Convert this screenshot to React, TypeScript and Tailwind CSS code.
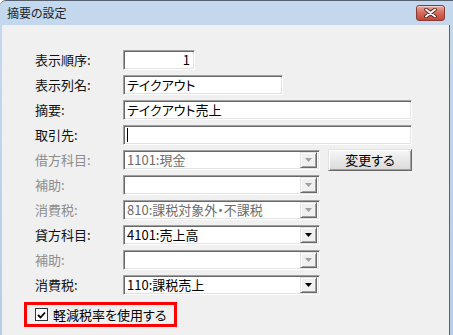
import React from 'react';

const sunken =
  'border border-t-[#a0a0a0] border-l-[#a0a0a0] border-b-white border-r-white shadow-[inset_1px_1px_0_#696969,inset_-1px_-1px_0_#e3e3e3] bg-white';
const raised =
  'border border-t-[#e3e3e3] border-l-[#e3e3e3] border-b-[#696969] border-r-[#696969] shadow-[inset_1px_1px_0_#ffffff,inset_-1px_-1px_0_#a0a0a0]';

const Row: React.FC<{ label: string; disabled?: boolean; children: React.ReactNode }> = ({
  label,
  disabled,
  children,
}) => (
  <div className="flex items-center h-[25px]">
    <span className={`w-[88px] shrink-0 text-[13px] ${disabled ? 'text-[#8d8d8d]' : 'text-[#111]'}`}>{label}</span>
    {children}
  </div>
);

const TextBox: React.FC<{ value?: string; width: string; right?: boolean; caret?: boolean }> = ({
  value,
  width,
  right,
  caret,
}) => (
  <div className={`${sunken} ${width} h-[20px] flex items-center px-[3px] text-[13px] ${right ? 'justify-end pr-[4px]' : ''}`}>
    {caret ? <span className="w-px h-[14px] bg-black" /> : <span className="leading-none">{value}</span>}
  </div>
);

const Combo: React.FC<{ value?: string; disabled?: boolean }> = ({ value, disabled }) => (
  <div className={`${sunken} w-[197px] h-[20px] flex items-center pl-[3px] pr-[2px]`}>
    <span className={`flex-1 text-[13px] leading-none ${disabled ? 'text-[#6d6d6d]' : 'text-black'}`}>{value}</span>
    <div className={`${raised} bg-[#f0f0f0] w-[17px] h-[16px] flex items-center justify-center`}>
      <svg width="7" height="4" viewBox="0 0 7 4">
        <polygon points="0,0 7,0 3.5,4" fill={disabled ? '#a0a0a0' : '#000'} />
      </svg>
    </div>
  </div>
);

export default function App() {
  return (
    <div className="w-[453px] h-[335px] flex flex-col bg-gradient-to-b from-[#c4d9ee] to-[#b6cee8] rounded-tl-[6px] border-t border-[#55606e] overflow-hidden font-['Noto_Sans_CJK_JP',sans-serif] [font-feature-settings:'palt']">
      <div className="h-[24px] shrink-0 flex items-center justify-between pl-[7px] pr-[8px]">
        <span className="text-[12px] text-[#1e1e1e]">摘要の設定</span>
        <div className="w-[29px] h-[16px] rounded-[3px] border border-[#8a3a30] bg-gradient-to-b from-[#e9a89c] via-[#d46b5c] to-[#c0473a] flex items-center justify-center shadow-[inset_0_1px_0_#f6cfc8]">
          <svg width="13" height="10" viewBox="0 0 13 10">
            <path d="M2 1.5 L11 8.5 M11 1.5 L2 8.5" stroke="#5a1c16" strokeWidth="3.6" strokeLinecap="round" />
            <path d="M2 1.5 L11 8.5 M11 1.5 L2 8.5" stroke="#ffffff" strokeWidth="2" strokeLinecap="round" />
          </svg>
        </div>
      </div>
      <div className="flex-1 flex pl-[2px] pr-[3px]">
        <div className="flex-1 bg-[#f0f0f0] border-r border-[#3f6b8a] pl-[33px] pt-[22px]">
          <Row label="表示順序:">
            <TextBox value="1" width="w-[72px]" right />
          </Row>
          <Row label="表示列名:">
            <TextBox value="テイクアウト" width="w-[160px]" />
          </Row>
          <Row label="摘要:">
            <TextBox value="テイクアウト売上" width="w-[289px]" />
          </Row>
          <Row label="取引先:">
            <TextBox width="w-[289px]" caret />
          </Row>
          <Row label="借方科目:" disabled>
            <Combo value="1101:現金" disabled />
            <button
              className={`${raised} ml-[8px] w-[84px] h-[22px] bg-gradient-to-b from-[#f7f7f7] to-[#dadada] text-[13px] text-black leading-none`}
            >
              変更する
            </button>
          </Row>
          <Row label="補助:" disabled>
            <Combo disabled />
          </Row>
          <Row label="消費税:" disabled>
            <Combo value="810:課税対象外・不課税" disabled />
          </Row>
          <Row label="貸方科目:">
            <Combo value="4101:売上高" />
          </Row>
          <Row label="補助:" disabled>
            <Combo disabled />
          </Row>
          <Row label="消費税:">
            <Combo value="110:課税売上" />
          </Row>
          <div className="-ml-[11px] mt-[5px] w-[153px] h-[25px] border-[3px] border-[#ff0000] flex items-center pl-[8px]">
            <div className="w-[13px] h-[13px] border border-[#333] bg-white flex items-center justify-center">
              <svg width="9" height="8" viewBox="0 0 9 8">
                <path d="M1 4 L3.5 6.5 L8 1.5" stroke="#000" strokeWidth="1.8" fill="none" />
              </svg>
            </div>
            <span className="ml-[5px] text-[13px] text-black leading-none">軽減税率を使用する</span>
          </div>
        </div>
      </div>
    </div>
  );
}
